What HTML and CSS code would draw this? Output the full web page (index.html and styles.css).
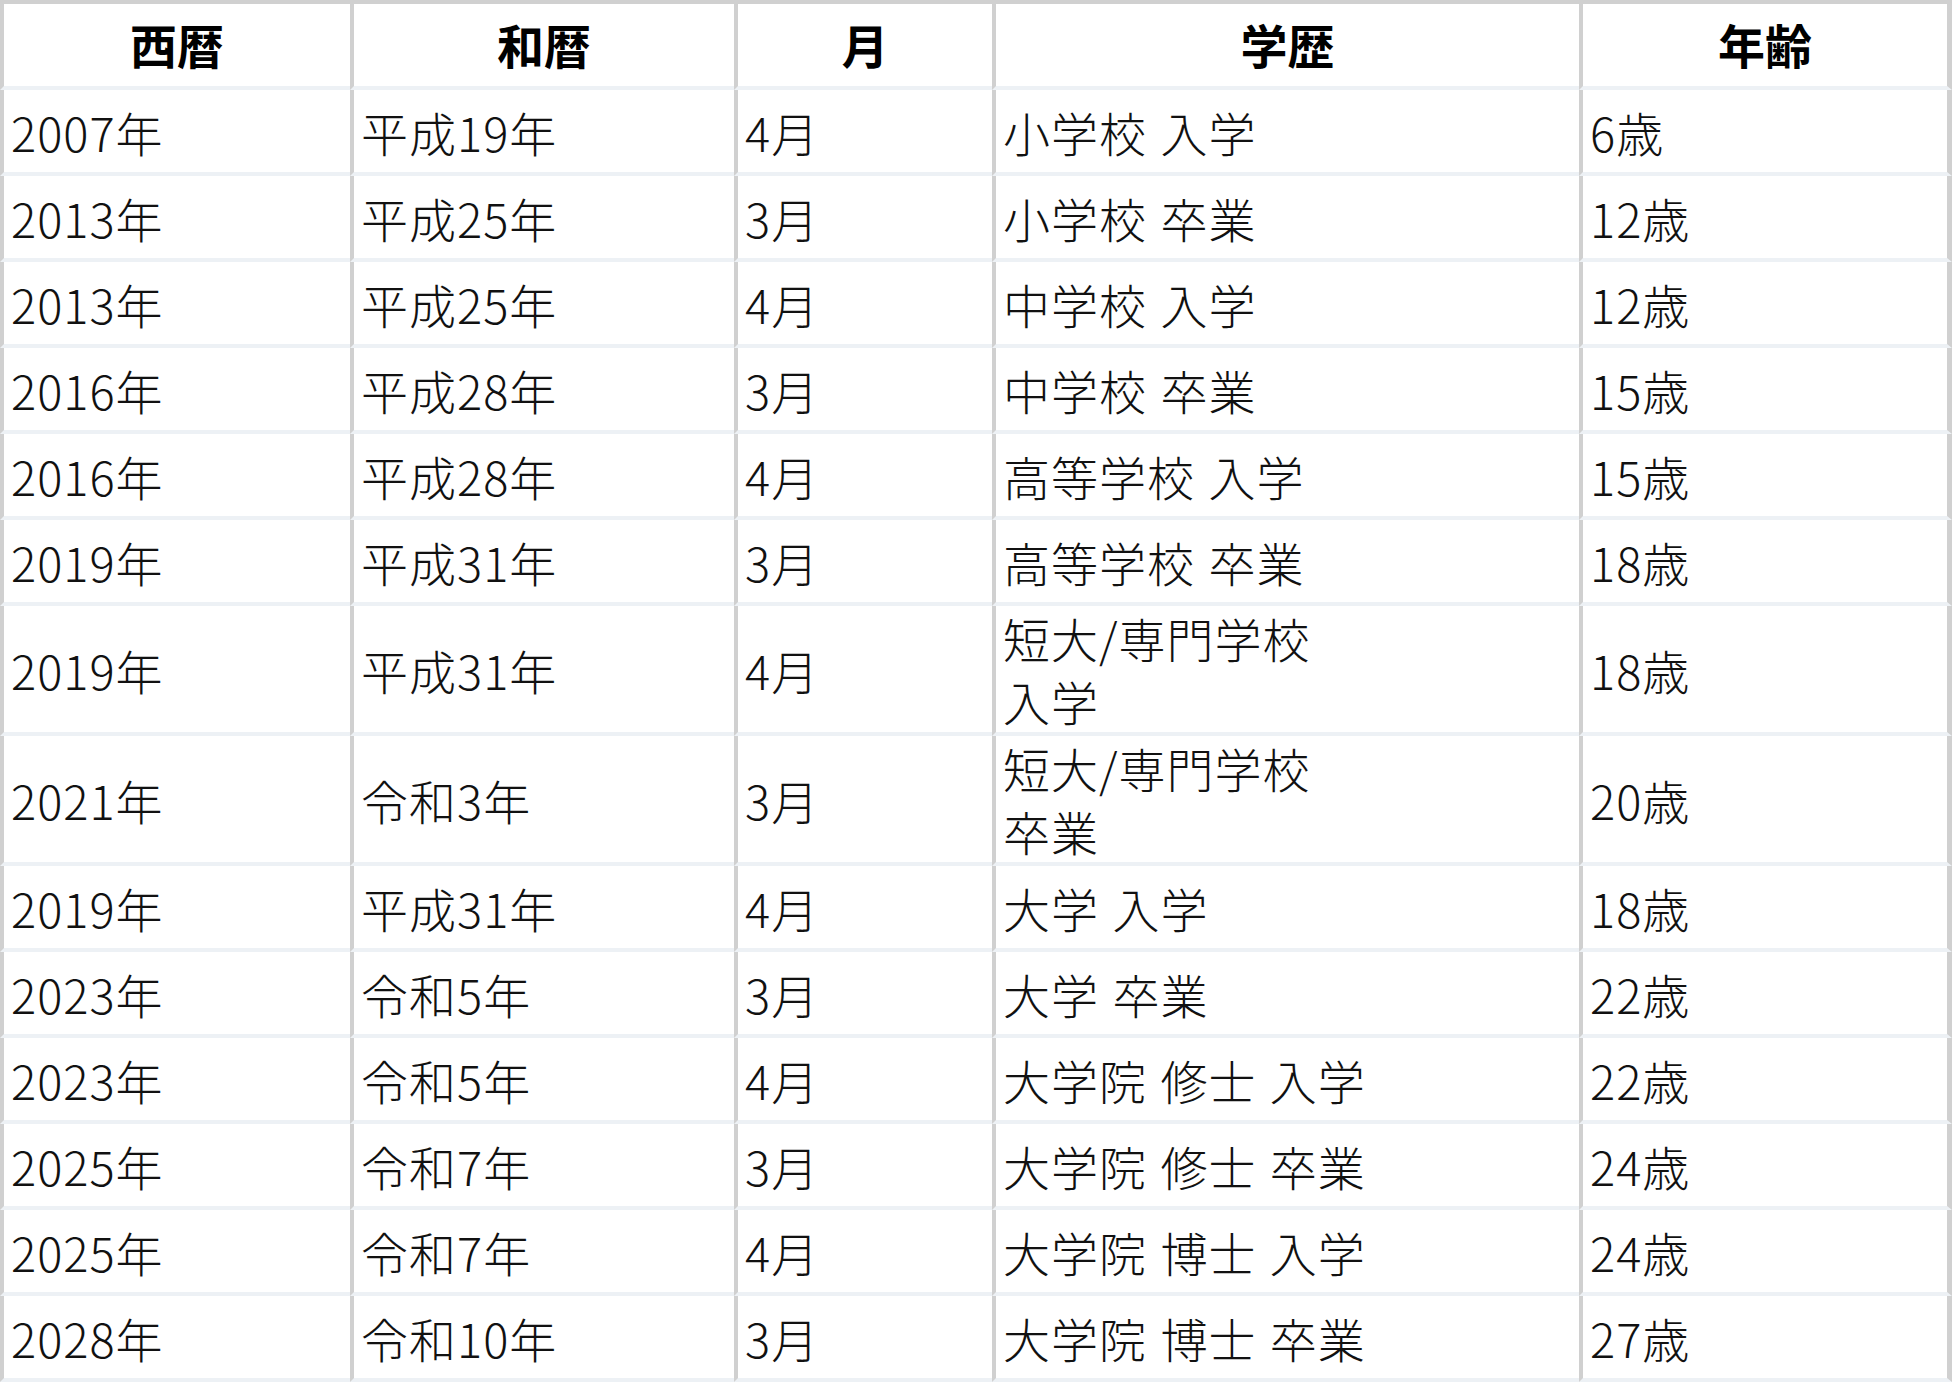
FILE: index.html
```html
<!DOCTYPE html>
<html lang="ja">
<head>
<meta charset="utf-8">
<title>学歴表</title>
<link rel="stylesheet" href="styles.css">
</head>
<body>
<table class="history">
  <colgroup>
    <col class="c-year">
    <col class="c-era">
    <col class="c-month">
    <col class="c-school">
    <col class="c-age">
  </colgroup>
  <thead>
    <tr><th>西暦</th><th>和暦</th><th>月</th><th>学歴</th><th>年齢</th></tr>
  </thead>
  <tbody>
    <tr><td>2007年</td><td>平成19年</td><td>4月</td><td>小学校 入学</td><td>6歳</td></tr>
    <tr><td>2013年</td><td>平成25年</td><td>3月</td><td>小学校 卒業</td><td>12歳</td></tr>
    <tr><td>2013年</td><td>平成25年</td><td>4月</td><td>中学校 入学</td><td>12歳</td></tr>
    <tr><td>2016年</td><td>平成28年</td><td>3月</td><td>中学校 卒業</td><td>15歳</td></tr>
    <tr><td>2016年</td><td>平成28年</td><td>4月</td><td>高等学校 入学</td><td>15歳</td></tr>
    <tr><td>2019年</td><td>平成31年</td><td>3月</td><td>高等学校 卒業</td><td>18歳</td></tr>
    <tr><td>2019年</td><td>平成31年</td><td>4月</td><td>短大/専門学校<br>入学</td><td>18歳</td></tr>
    <tr><td>2021年</td><td>令和3年</td><td>3月</td><td>短大/専門学校<br>卒業</td><td>20歳</td></tr>
    <tr><td>2019年</td><td>平成31年</td><td>4月</td><td>大学 入学</td><td>18歳</td></tr>
    <tr><td>2023年</td><td>令和5年</td><td>3月</td><td>大学 卒業</td><td>22歳</td></tr>
    <tr><td>2023年</td><td>令和5年</td><td>4月</td><td>大学院 修士 入学</td><td>22歳</td></tr>
    <tr><td>2025年</td><td>令和7年</td><td>3月</td><td>大学院 修士 卒業</td><td>24歳</td></tr>
    <tr><td>2025年</td><td>令和7年</td><td>4月</td><td>大学院 博士 入学</td><td>24歳</td></tr>
    <tr><td>2028年</td><td>令和10年</td><td>3月</td><td>大学院 博士 卒業</td><td>27歳</td></tr>
  </tbody>
</table>
</body>
</html>
```
FILE: styles.css
```css
html, body {
  margin: 0;
  padding: 0;
  background: #ffffff;
}

body {
  font-family: "Noto Sans CJK JP", "Noto Sans", sans-serif;
  color: #111111;
}

.history {
  border-collapse: separate;
  border-spacing: 0;
  table-layout: fixed;
  width: 1952px;
  font-size: 47px;
  line-height: 63px;
}

.c-year { width: 350px; }
.c-era { width: 384px; }
.c-month { width: 258px; }
.c-school { width: 587px; }
.c-age { width: 373px; }

.history th,
.history td {
  height: 82px;
  padding: 0 0 0 7px;
  vertical-align: middle;
  border-left: 4px solid #d0d0d0;
  border-bottom: 4px solid #edf1f5;
  box-sizing: content-box;
}

.history th:last-child,
.history td:last-child {
  border-right: 5px solid #d0d0d0;
}

.history th {
  border-top: 4px solid #d0d0d0;
  padding-left: 0;
  padding-bottom: 3px;
  height: 79px;
  text-align: center;
  font-weight: 700;
  color: #000000;
}

.history td {
  text-align: left;
  font-weight: 300;
  letter-spacing: 1px;
  word-spacing: 2px;
}
```
